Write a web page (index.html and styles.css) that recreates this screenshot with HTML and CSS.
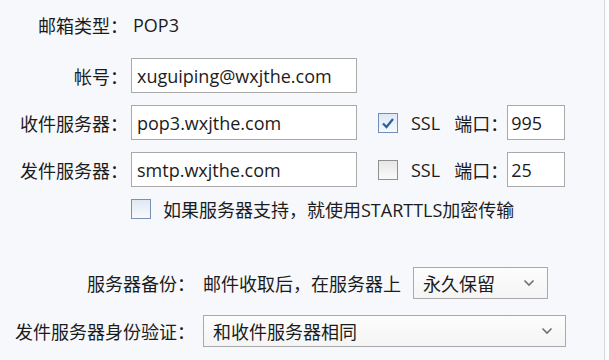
FILE: index.html
```html
<!DOCTYPE html>
<html lang="zh-CN">
<head>
  <meta charset="UTF-8">
  <title>账户设置</title>
  <link rel="stylesheet" href="styles.css">
</head>
<body>
  <div class="panel">
    <div class="row first">
      <label class="label">邮箱类型：</label>
      <span class="value">POP3</span>
    </div>
    <div class="row">
      <label class="label">帐号：</label>
      <input type="text" class="field wide" value="xuguiping@wxjthe.com">
    </div>
    <div class="row">
      <label class="label">收件服务器：</label>
      <input type="text" class="field wide" value="pop3.wxjthe.com">
      <span class="check checked">
        <svg width="14" height="12" viewBox="0 0 14 12"><path d="M2 6.5 L5.5 10 L12 2" fill="none" stroke="#2d5e9e" stroke-width="2.2"/></svg>
      </span>
      <span class="ssl">SSL</span>
      <span class="port-label">端口：</span>
      <input type="text" class="field port" value="995">
    </div>
    <div class="row">
      <label class="label">发件服务器：</label>
      <input type="text" class="field wide" value="smtp.wxjthe.com">
      <span class="check grey"></span>
      <span class="ssl">SSL</span>
      <span class="port-label">端口：</span>
      <input type="text" class="field port" value="25">
    </div>
    <div class="tls-row">
      <span class="check blue"></span>
      <span>如果服务器支持，就使用STARTTLS加密传输</span>
    </div>

    <div class="lower">
      <div class="lrow">
        <label class="label-lg">服务器备份：</label>
        <span class="note">邮件收取后，在服务器上</span>
        <div class="dropdown short">
          <span>永久保留</span>
          <svg width="12" height="8" viewBox="0 0 12 8"><path d="M1.5 1.5 L6 6 L10.5 1.5" fill="none" stroke="#707070" stroke-width="1.6"/></svg>
        </div>
      </div>
      <div class="lrow">
        <label class="label-lg">发件服务器身份验证：</label>
        <div class="dropdown long">
          <span>和收件服务器相同</span>
          <svg width="12" height="8" viewBox="0 0 12 8"><path d="M1.5 1.5 L6 6 L10.5 1.5" fill="none" stroke="#707070" stroke-width="1.6"/></svg>
        </div>
      </div>
    </div>
  </div>
</body>
</html>
```

FILE: styles.css
```css
body {
  margin: 0;
  background: #fbfcfd;
  font-family: "Open Sans", "Noto Sans CJK SC", sans-serif;
  font-size: 18px;
  color: #1c1c1c;
}
.panel {
  width: 605px;
  height: 360px;
  box-sizing: border-box;
  padding-top: 7px;
  background: #f7f8fb;
  border-right: 1px solid #d3d6db;
}
.row {
  display: flex;
  align-items: center;
  height: 35px;
  margin-bottom: 12px;
}
.row.first {
  margin-bottom: 16px;
}
.label {
  width: 128px;
  text-align: right;
  margin-right: 3px;
  flex-shrink: 0;
}
.value {
  padding-left: 2px;
}
.field {
  box-sizing: border-box;
  height: 35px;
  border: 1px solid #a9a9a9;
  background: #fff;
  font-family: inherit;
  font-size: 18px;
  color: #1c1c1c;
  padding: 0 5px;
  margin: 0;
  outline: none;
}
.wide {
  width: 226px;
}
.port {
  width: 58px;
  padding-left: 3px;
}
.check {
  box-sizing: border-box;
  width: 20px;
  height: 20px;
  display: inline-flex;
  align-items: center;
  justify-content: center;
  flex-shrink: 0;
}
.checked {
  border: 1px solid #6f8fb8;
  background: linear-gradient(#dde8f5, #f6f9fd);
  margin-left: 21px;
}
.grey {
  border: 1px solid #8f8f8f;
  background: linear-gradient(#e6e6e6, #fafafa);
  margin-left: 21px;
}
.blue {
  border: 1px solid #7891b4;
  background: linear-gradient(#dfe8f4, #f8fafd);
}
.ssl {
  margin-left: 13px;
}
.port-label {
  margin-left: 14px;
  width: 53px;
  white-space: nowrap;
  overflow: hidden;
}
.tls-row {
  display: flex;
  align-items: center;
  gap: 12px;
  margin-left: 131px;
  margin-top: -1px;
  height: 22px;
}
.lower {
  margin-top: 47px;
}
.lrow {
  display: flex;
  align-items: center;
  height: 32px;
  margin-bottom: 16px;
}
.label-lg {
  width: 195px;
  text-align: right;
  margin-right: 8px;
  flex-shrink: 0;
}
.note {
  margin-right: 12px;
}
.dropdown {
  box-sizing: border-box;
  height: 32px;
  border: 1px solid #aaaaaa;
  background: linear-gradient(#fdfdfd, #f4f4f4);
  display: flex;
  align-items: center;
  justify-content: space-between;
  padding: 0 12px 0 9px;
}
.dropdown.short {
  width: 135px;
}
.dropdown.long {
  width: 363px;
}
```
